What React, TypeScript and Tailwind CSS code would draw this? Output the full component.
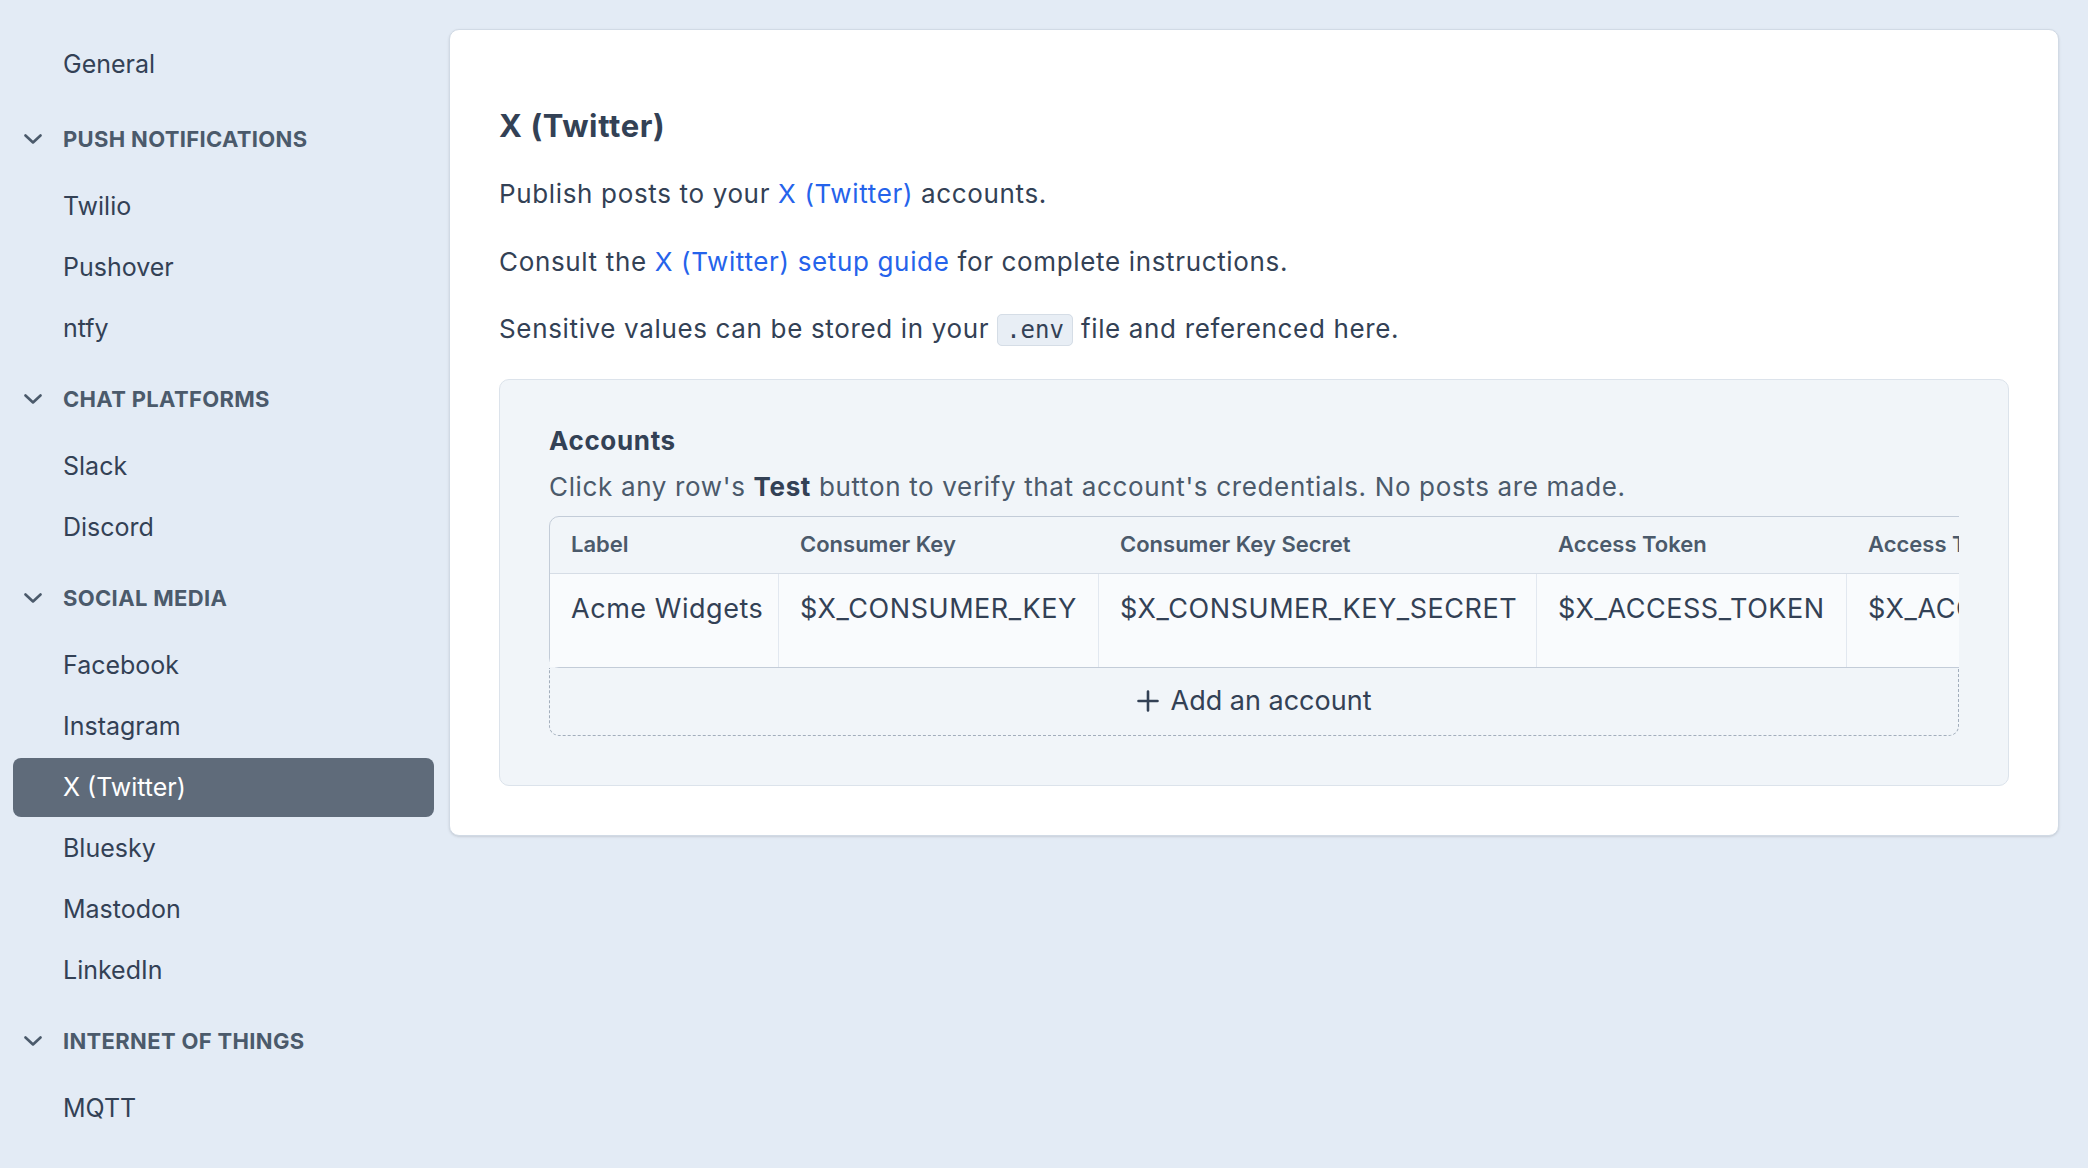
const groups: { title: string | null; items: string[] }[] = [
    { title: null, items: ["General"] },
    { title: "Push Notifications", items: ["Twilio", "Pushover", "ntfy"] },
    { title: "Chat Platforms", items: ["Slack", "Discord"] },
    { title: "Social Media", items: ["Facebook", "Instagram", "X (Twitter)", "Bluesky", "Mastodon", "LinkedIn"] },
    { title: "Internet of Things", items: ["MQTT"] },
];

const columns = [
    { title: "Label", value: "Acme Widgets", width: "w-[229px]" },
    { title: "Consumer Key", value: "$X_CONSUMER_KEY", width: "w-[320px]" },
    { title: "Consumer Key Secret", value: "$X_CONSUMER_KEY_SECRET", width: "w-[438px]" },
    { title: "Access Token", value: "$X_ACCESS_TOKEN", width: "w-[310px]" },
    { title: "Access Token Secret", value: "$X_ACCESS_TOKEN_SECRET", width: "w-[440px]" },
    { title: "", value: "", width: "w-[140px]" },
];

const Chevron = () => (
    <svg width="18" height="10" viewBox="0 0 18 10" fill="none">
        <polyline points="1.5,1.5 9,8.5 16.5,1.5" stroke="#4b5a6b" strokeWidth="2.6" strokeLinecap="round" strokeLinejoin="round" />
    </svg>
);

const PlusIcon = () => (
    <svg width="22" height="22" viewBox="0 0 22 22" fill="none">
        <path d="M11 1.5v19M1.5 11h19" stroke="#334155" strokeWidth="2.6" strokeLinecap="round" />
    </svg>
);

const Sidebar = ({ active }: { active: string }) => {
    return (
        <nav className="w-[449px] shrink-0 pl-[13px] pr-[15px] pt-[35px]">
            {groups.map((group, gi) => (
                <div key={gi}>
                    {group.title && (
                        <div className={`${gi === 1 ? "mt-[25px]" : "mt-[21px]"} mb-[18px] flex h-[40px] items-center`}>
                            <div className="w-[50px] pl-[11px]">
                                <Chevron />
                            </div>
                            <span className="text-[22px] font-bold uppercase tracking-[0.015em] text-[#4b5a6b]">
                                {group.title}
                            </span>
                        </div>
                    )}
                    {group.items.map((item) => (
                        <div
                            key={item}
                            className={`mb-[2px] flex h-[59px] items-center rounded-[8px] pl-[50px] text-[25px] ${
                                item === active ? "bg-[#5f6b7a] text-white" : "text-[#334155]"
                            }`}
                        >
                            {item}
                        </div>
                    ))}
                </div>
            ))}
        </nav>
    );
};

const Accounts = () => {
    return (
        <div className="mt-[29px] rounded-[10px] border border-[#dce3eb] bg-[#f1f5f9] px-[49px] pt-[42px] pb-[49px]">
            <h3 className="text-[26px] font-bold leading-[37.5px] tracking-[0.025em] text-[#334155]">Accounts</h3>
            <p className="mt-[9px] text-[26px] leading-[37.5px] tracking-[0.025em] text-[#4b5a6b]">
                Click any row's <span className="font-bold text-[#334155]">Test</span> button to verify that account's
                credentials. No posts are made.
            </p>
            <div className="mt-[10px] overflow-hidden">
                <div className="w-max rounded-[10px] border border-[#c3ccd8]">
                    <div className="flex h-[57px] items-center border-b border-[#d6dde6]">
                        {columns.map((col, i) => (
                            <div key={i} className={`${col.width} px-[21px] text-[22px] font-semibold text-[#4b5a6b]`}>
                                {col.title}
                            </div>
                        ))}
                    </div>
                    <div className="flex h-[93px] bg-[#f9fbfd]">
                        {columns.map((col, i) => (
                            <div
                                key={i}
                                className={`${col.width} whitespace-nowrap border-r border-[#e2e8f0] px-[21px] pt-[15px] text-[27px] leading-[39px] tracking-[0.02em] text-[#334155]`}
                            >
                                {col.value}
                            </div>
                        ))}
                    </div>
                </div>
            </div>
            <div className="flex h-[68px] items-center justify-center gap-[12px] rounded-b-[10px] border-x border-b border-dashed border-[#a3aebc] text-[27px] text-[#334155]">
                <PlusIcon />
                <span>Add an account</span>
            </div>
        </div>
    );
};

export default function App() {
    return (
        <div className="flex min-h-screen w-full bg-[#e3ebf5] font-['Inter',sans-serif]">
            <Sidebar active="X (Twitter)" />
            <main className="min-w-0 flex-1 pt-[29px] pr-[29px] pb-[29px]">
                <div className="rounded-[10px] border border-[#d1dae5] bg-white px-[49px] pt-[78px] pb-[49px] shadow-sm">
                    <h2 className="text-[31px] font-bold leading-[36px] tracking-[0.02em] text-[#334155]">X (Twitter)</h2>
                    <div className="text-[26px] leading-[37.5px] tracking-[0.025em] text-[#334155]">
                        <p className="mt-[31px]">
                            Publish posts to your <a className="text-[#2563eb]">X (Twitter)</a> accounts.
                        </p>
                        <p className="mt-[30px]">
                            Consult the <a className="text-[#2563eb]">X (Twitter) setup guide</a> for complete
                            instructions.
                        </p>
                        <p className="mt-[30px]">
                            Sensitive values can be stored in your{" "}
                            <code className="rounded-[5px] border border-[#d5dde6] bg-[#e8eef5] px-[8px] py-[1px] font-['DejaVu_Sans_Mono',monospace] text-[24px] tracking-normal">
                                .env
                            </code>{" "}
                            file and referenced here.
                        </p>
                    </div>
                    <Accounts />
                </div>
            </main>
        </div>
    );
}
